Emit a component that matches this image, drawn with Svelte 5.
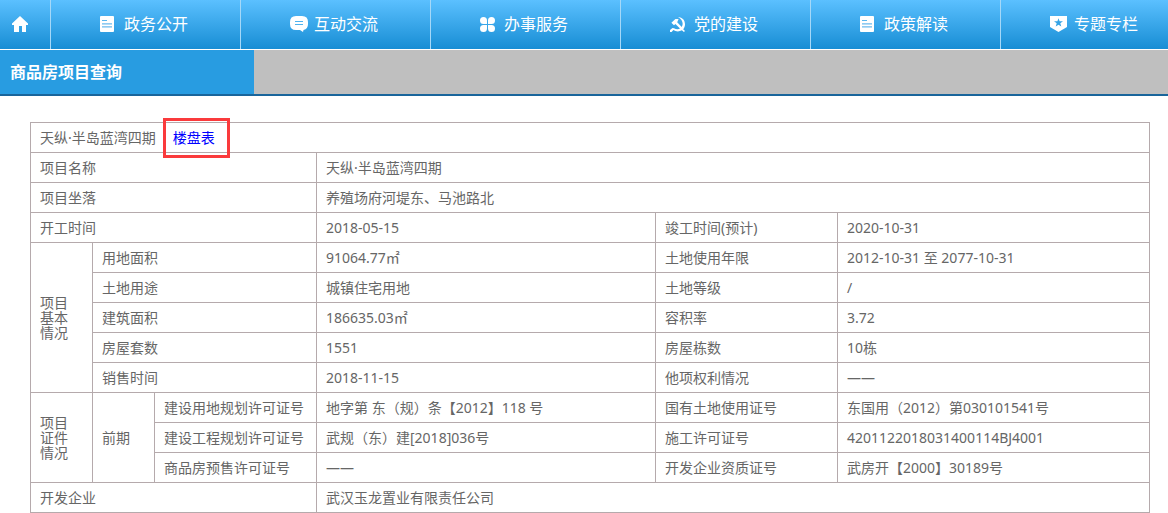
<script>
  const navItems = [
    { label: '政务公开', icon: 'doc' },
    { label: '互动交流', icon: 'chat' },
    { label: '办事服务', icon: 'clover' },
    { label: '党的建设', icon: 'party' },
    { label: '政策解读', icon: 'doc' },
    { label: '专题专栏', icon: 'badge' }
  ];

  const basics = [
    ['用地面积', '91064.77㎡', '土地使用年限', '2012-10-31 至 2077-10-31'],
    ['土地用途', '城镇住宅用地', '土地等级', '/'],
    ['建筑面积', '186635.03㎡', '容积率', '3.72'],
    ['房屋套数', '1551', '房屋栋数', '10栋'],
    ['销售时间', '2018-11-15', '他项权利情况', '——']
  ];

  const permits = [
    ['建设用地规划许可证号', '地字第 东（规）条【2012】118 号', '国有土地使用证号', '东国用（2012）第030101541号'],
    ['建设工程规划许可证号', '武规（东）建[2018]036号', '施工许可证号', '4201122018031400114BJ4001'],
    ['商品房预售许可证号', '——', '开发企业资质证号', '武房开【2000】30189号']
  ];
</script>

<nav class="nav">
  <a class="home" href="#home" aria-label="首页">
    <svg width="16" height="16" viewBox="0 0 16 16">
      <path d="M8 0 16 7.6V9H14V16H10V10H7V16H2V9H0V7.6Z" fill="#fff" />
    </svg>
  </a>
  {#each navItems as item}
    <a class="nav-item" href="#nav">
      <span class="nav-icon">
        {#if item.icon === 'doc'}
          <svg width="14" height="16" viewBox="0 0 14 16">
            <rect width="14" height="16" rx="1" fill="#fff" />
            <path d="M2 4.5H7" stroke="#5ab8ef" />
            <path d="M2 7.5H12M2 10.5H12" stroke="#8ecbf2" />
            <path d="M2 8.5H12M2 11.5H12" stroke="#b5dcf5" />
          </svg>
        {:else if item.icon === 'chat'}
          <svg width="18" height="16" viewBox="0 0 18 16">
            <path d="M6 0H12Q18 0 18 6V8Q18 13 13.5 14L13 16 10 14H6Q0 14 0 8V6Q0 0 6 0Z" fill="#fff" />
            <path d="M5 5.5H13M5 8.5H13" stroke="#4db2ef" />
          </svg>
        {:else if item.icon === 'clover'}
          <svg width="15" height="16" viewBox="0 0 15 16">
            <path
              d="M7 8H3.5A3.5 3.5 0 1 1 7 4.5ZM8 8V4.5A3.5 3.5 0 1 1 11.5 8ZM7 9V12.5A3.5 3.5 0 1 1 3.5 9ZM8 9H11.5A3.5 3.5 0 1 1 8 12.5Z"
              fill="#fff"
            />
          </svg>
        {:else if item.icon === 'party'}
          <svg width="15" height="16" viewBox="0 0 15 16">
            <path
              d="M8 1C12.6 1.3 15 4.4 15 8.3 15 10.4 14.3 12 13.2 13.2L15 15 13.9 16 11.9 14.3C9 16 5.7 15.6 3.4 14L1.6 16 0 15.9V14.1L2.5 12 4 12.2C6 13.4 8.3 13.5 10 12.6L5.4 8 4 9.3 1.4 6.8 5.4 2.9 8.6 3 7.2 6.3 11.7 10.9C13.7 8.3 12.7 3.6 8 1Z"
              fill="#fff"
            />
          </svg>
        {:else}
          <svg width="17" height="16" viewBox="0 0 17 16">
            <path d="M0 0H17V11L8.5 16 0 11Z" fill="#fff" />
            <path d="M8.5 2.2 9.6 5.3H13L10.3 7.3 11.3 10.6 8.5 8.7 5.7 10.6 6.7 7.3 4 5.3H7.4Z" fill="#36a4e6" />
          </svg>
        {/if}
      </span>
      {item.label}
    </a>
  {/each}
</nav>

<header class="title-bar">
  <h1>商品房项目查询</h1>
</header>

<main>
  <table>
    <colgroup>
      <col class="col-group" />
      <col class="col-group" />
      <col class="col-name" />
      <col class="col-value" />
      <col class="col-label" />
      <col />
    </colgroup>
    <tbody>
      <tr>
        <td colspan="6">天纵·半岛蓝湾四期<a class="building-link" href="#buildings">楼盘表</a></td>
      </tr>
      <tr>
        <th colspan="3">项目名称</th>
        <td colspan="3">天纵·半岛蓝湾四期</td>
      </tr>
      <tr>
        <th colspan="3">项目坐落</th>
        <td colspan="3">养殖场府河堤东、马池路北</td>
      </tr>
      <tr>
        <th colspan="3">开工时间</th>
        <td>2018-05-15</td>
        <th>竣工时间(预计)</th>
        <td>2020-10-31</td>
      </tr>
      {#each basics as [name, value, name2, value2], i}
        <tr>
          {#if i === 0}
            <th rowspan={basics.length}>项目<br />基本<br />情况</th>
          {/if}
          <th colspan="2">{name}</th>
          <td>{value}</td>
          <th>{name2}</th>
          <td>{value2}</td>
        </tr>
      {/each}
      {#each permits as [name, value, name2, value2], i}
        <tr>
          {#if i === 0}
            <th rowspan={permits.length}>项目<br />证件<br />情况</th>
            <th rowspan={permits.length}>前期</th>
          {/if}
          <th>{name}</th>
          <td>{value}</td>
          <th>{name2}</th>
          <td>{value2}</td>
        </tr>
      {/each}
      <tr>
        <th colspan="3">开发企业</th>
        <td colspan="3">武汉玉龙置业有限责任公司</td>
      </tr>
    </tbody>
  </table>
</main>

<style>
  :global(body) {
    margin: 0;
    background: #fff;
    color: #666;
    font-family: 'Noto Sans', 'Noto Sans CJK SC', sans-serif;
    font-size: 14px;
  }

  .nav {
    display: flex;
    height: 49px;
    overflow: hidden;
    border-bottom: 1px solid #fff;
    background: linear-gradient(#5bc0ff, #178dd4);
  }

  .nav a {
    display: flex;
    flex: none;
    align-items: center;
    box-sizing: border-box;
    padding-bottom: 1px;
    color: #fff;
    font-size: 16px;
    line-height: 24px;
    text-decoration: none;
  }

  .nav svg {
    display: block;
  }

  .nav .home {
    width: 50px;
    padding-left: 12px;
  }

  .nav .nav-item {
    width: 190px;
    padding-left: 49px;
    border-left: 1px solid #a5d8f8;
  }

  .nav-icon {
    width: 24px;
  }

  .title-bar {
    display: flex;
    height: 44px;
    border-bottom: 2px solid #19659b;
    background: #bfbfbf;
  }

  h1 {
    box-sizing: border-box;
    width: 254px;
    margin: 0;
    padding-left: 10px;
    background: #289ce1;
    color: #fff;
    font-size: 16px;
    line-height: 44px;
  }

  main {
    padding: 26px 18px 0 30px;
  }

  table {
    width: 100%;
    border-collapse: collapse;
    table-layout: fixed;
  }

  .col-group {
    width: 62px;
  }

  .col-name {
    width: 162px;
  }

  .col-value {
    width: 339px;
  }

  .col-label {
    width: 182px;
  }

  th,
  td {
    box-sizing: border-box;
    height: 30px;
    padding: 0 9px;
    border: 1px solid #b5aaac;
    font-weight: 400;
    line-height: 15px;
    text-align: left;
  }

  .building-link {
    position: relative;
    display: inline-block;
    margin-left: 17px;
    color: #00f;
    line-height: 20px;
    text-decoration: none;
  }

  /* red frame around the link, drawn over the cell borders */
  .building-link::after {
    content: '';
    position: absolute;
    inset: -10px -15px -10px -10px;
    border: 3px solid #fa3a3c;
  }
</style>
